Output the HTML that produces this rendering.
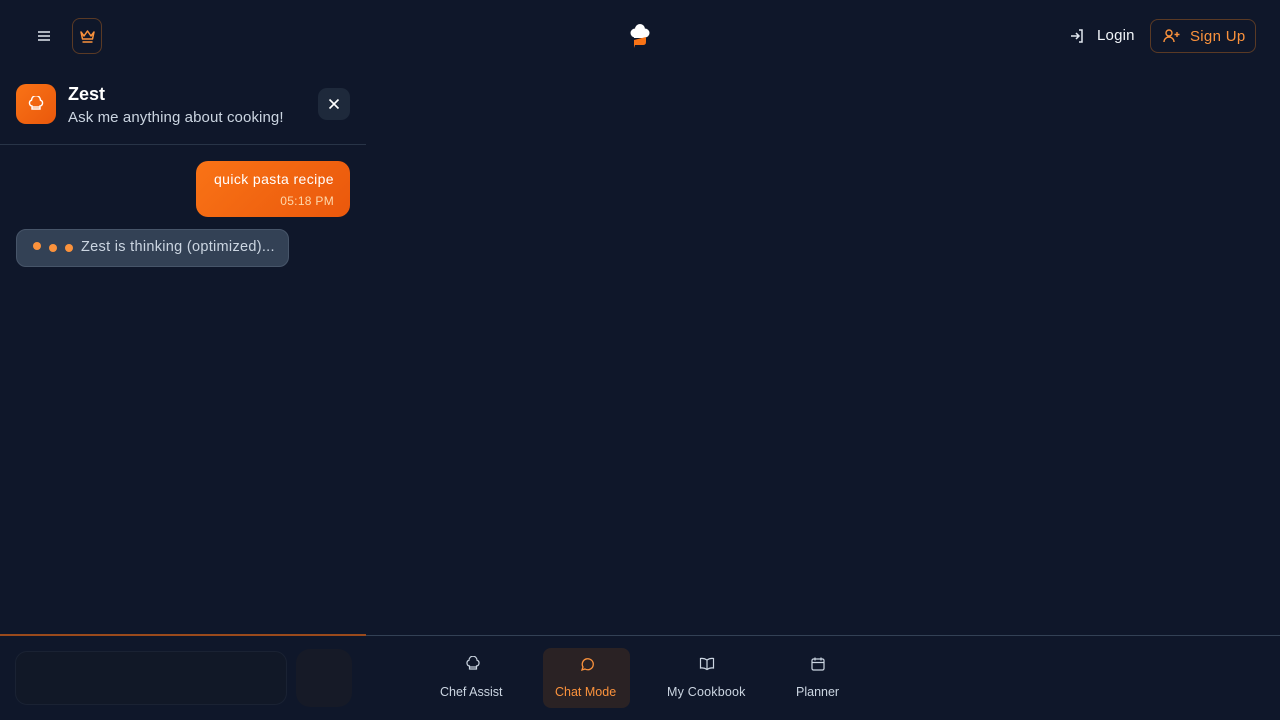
<!DOCTYPE html>
<html><head><style>
*{box-sizing:border-box;margin:0;padding:0}
body{width:1280px;height:720px;background:#0f172a;font-family:"Liberation Sans",sans-serif;position:relative;overflow:hidden;color:#fff}
.abs{position:absolute}
svg{display:block}
</style></head><body>
<div class="abs" style="left:36px;top:29px">
<svg width="16" height="14" viewBox="0 0 16 14"><path d="M2 3h12M2 7h12M2 11h12" stroke="#e2e8f0" stroke-width="1.6"/></svg></div>
<div class="abs" style="left:72px;top:18px;width:30px;height:36px;border:1px solid #5a3a25;border-radius:8px;">
<svg class="abs" style="left:6px;top:9px" width="17" height="16" viewBox="0 0 17 16"><path d="M2 4l3 4 3.5-5 3.5 5 3-4-1.5 7h-10z" fill="none" stroke="#fb923c" stroke-width="1.5" stroke-linejoin="round"/><path d="M3.5 14h10" stroke="#fb923c" stroke-width="1.5"/></svg></div>
<div class="abs" style="left:629px;top:23px">
<svg width="22" height="27" viewBox="0 0 22 27"><circle cx="6" cy="10" r="4.5" fill="#fff"/><circle cx="11" cy="6" r="5" fill="#fff"/><circle cx="16" cy="10" r="4.5" fill="#fff"/><rect x="5" y="10" width="12" height="5" fill="#fff"/><path d="M5 17l12-3v5q0 3-3 3h-8l-1 3z" fill="#f97316"/></svg></div>
<div class="abs" style="left:1069px;top:28px"><svg width="16" height="16" viewBox="0 0 16 16" fill="none" stroke="#e2e8f0" stroke-width="1.5"><path d="M10 2h3v12h-3M2 8h8M7 5l3 3-3 3"/></svg></div>
<div class="abs" style="left:1097px;top:27px;font-size:15px;color:#f1f5f9;letter-spacing:0.2px">Login</div>
<div class="abs" style="left:1150px;top:19px;width:106px;height:34px;border:1px solid #5a3a25;border-radius:8px">
<svg class="abs" style="left:12px;top:8px" width="18" height="16" viewBox="0 0 18 16" fill="none" stroke="#fb923c" stroke-width="1.4"><circle cx="6" cy="5" r="3"/><path d="M1 14c0-3 2.5-5 5-5s5 2 5 5M14 4v5M11.5 6.5h5"/></svg>
<div class="abs" style="left:39px;top:8px;font-size:15px;color:#fb923c;letter-spacing:0.3px">Sign Up</div></div>
<div class="abs" style="left:16px;top:84px;width:40px;height:40px;border-radius:10px;background:linear-gradient(135deg,#f97316,#ea580c)">
<svg class="abs" style="left:12px;top:12px" width="16" height="16" viewBox="0 0 16 16" fill="none" stroke="#fff" stroke-width="1.4"><path d="M4 10a3 3 0 0 1-.5-5.8A4 4 0 0 1 12.5 4.2 3 3 0 0 1 12 10v3H4z"/><path d="M4 11h8"/></svg></div>
<div class="abs" style="left:68px;top:84px;font-size:18px;font-weight:bold">Zest</div>
<div class="abs" style="left:68px;top:109px;font-size:15px;color:#cbd5e1;letter-spacing:0.1px">Ask me anything about cooking!</div>
<div class="abs" style="left:318px;top:88px;width:32px;height:32px;border-radius:9px;background:#1e293b">
<svg class="abs" style="left:10px;top:10px" width="12" height="12" viewBox="0 0 12 12"><path d="M1.5 1.5l9 9M10.5 1.5l-9 9" stroke="#fff" stroke-width="1.6"/></svg></div>
<div class="abs" style="left:0;top:144px;width:366px;height:1px;background:#283447"></div>
<div class="abs" style="left:196px;top:161px;width:154px;height:56px;border-radius:12px;background:linear-gradient(135deg,#f97316,#ea580c)">
<div class="abs" style="right:16px;top:10px;font-size:14px;white-space:nowrap;letter-spacing:0.4px">quick pasta recipe</div>
<div class="abs" style="right:16px;top:33px;font-size:12px;color:#fed7aa;letter-spacing:0.3px">05:18 PM</div></div>
<div class="abs" style="left:16px;top:229px;width:273px;height:38px;border-radius:10px;background:#334155;border:1px solid #475569">
<div class="abs" style="left:16px;top:12px;width:8px;height:8px;border-radius:50%;background:#fb923c"></div>
<div class="abs" style="left:32px;top:14px;width:8px;height:8px;border-radius:50%;background:#fb923c"></div>
<div class="abs" style="left:48px;top:14px;width:8px;height:8px;border-radius:50%;background:#fb923c"></div>
<div class="abs" style="left:64px;top:9px;font-size:14.5px;color:#cbd5e1;letter-spacing:0.3px;white-space:nowrap">Zest is thinking (optimized)...</div></div>
<div class="abs" style="left:0;top:635px;width:1280px;height:1px;background:#334155"></div>
<div class="abs" style="left:0;top:634px;width:366px;height:2px;background:#9a4a1c"></div>
<div class="abs" style="left:15px;top:651px;width:272px;height:54px;border-radius:12px;background:#111827;border:1px solid #1a2233"></div>
<div class="abs" style="left:296px;top:649px;width:56px;height:58px;border-radius:14px;background:#161a27"></div>
<div class="abs" style="left:466px;top:656px"><svg width="14" height="16" viewBox="0 0 14 16" fill="none" stroke="#cbd5e1" stroke-width="1.2"><path d="M3.5 10a3 3 0 0 1-.5-5.8A4 4 0 0 1 11 4.2 3 3 0 0 1 10.5 10v3h-7z"/><path d="M3.5 11h7"/></svg></div>
<div class="abs" style="left:440px;top:685px;font-size:12.5px;color:#cbd5e1">Chef Assist</div>
<div class="abs" style="left:543px;top:648px;width:87px;height:60px;border-radius:8px;background:#2a2224"></div>
<div class="abs" style="left:579px;top:656px"><svg width="16" height="16" viewBox="0 0 16 16" fill="none" stroke="#fb923c" stroke-width="1.3"><path d="M3 14l1-3A5.5 5.5 0 1 1 6 13z"/></svg></div>
<div class="abs" style="left:555px;top:685px;font-size:12.5px;color:#fb923c">Chat Mode</div>
<div class="abs" style="left:699px;top:656px"><svg width="16" height="16" viewBox="0 0 16 16" fill="none" stroke="#cbd5e1" stroke-width="1.2"><path d="M8 4v10M8 4Q5 2 1.5 2.5v9.5Q5 11.5 8 13.5q3-2 6.5-1.5V2.5Q11 2 8 4z"/></svg></div>
<div class="abs" style="left:667px;top:685px;font-size:12.5px;color:#cbd5e1;letter-spacing:0.2px">My Cookbook</div>
<div class="abs" style="left:810px;top:656px"><svg width="16" height="16" viewBox="0 0 16 16" fill="none" stroke="#cbd5e1" stroke-width="1.2"><rect x="2" y="3" width="12" height="11" rx="1.5"/><path d="M2 6.5h12M5 1.5v3M11 1.5v3"/></svg></div>
<div class="abs" style="left:796px;top:685px;font-size:12.5px;color:#cbd5e1">Planner</div>
</body></html>
